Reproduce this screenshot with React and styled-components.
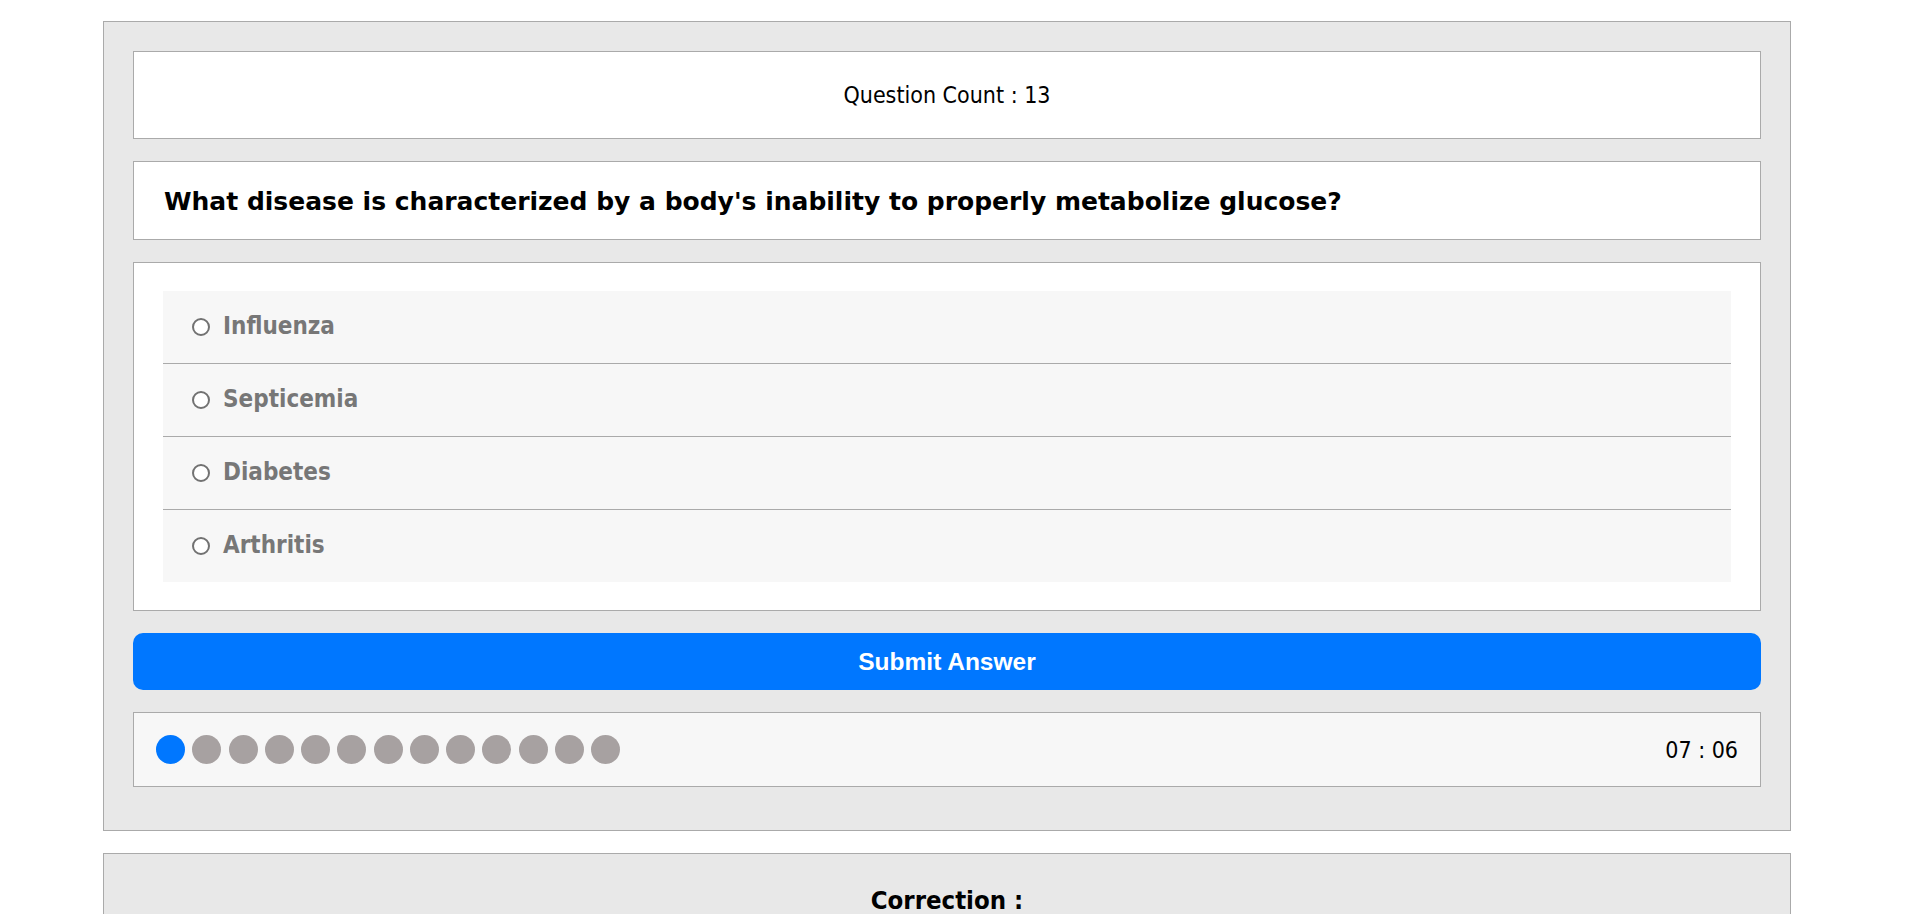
import React, { useState } from "react";
import styled, { createGlobalStyle } from "styled-components";

const Global = createGlobalStyle`
  html, body { margin: 0; padding: 0; background: #ffffff; }
  body { font-family: Tahoma, "DejaVu Sans Condensed", "DejaVu Sans", Verdana, sans-serif; color: #000; }
  * { box-sizing: border-box; }
`;

const Page = styled.div`
  padding: 21px 0 19px 103px;
  display: flex;
  flex-direction: column;
  gap: 22px;
`;

const Quiz = styled.section`
  width: 1688px;
  background: #e8e8e8;
  border: 1px solid #aaaaaa;
  padding: 29px 29px 43px;
  display: flex;
  flex-direction: column;
  gap: 22px;
`;

const Card = styled.div`
  background: ${(p) => p.$bg || "#ffffff"};
  border: 1px solid #aaaaaa;
`;

const CountCard = styled(Card)`
  height: 88px;
  display: flex;
  align-items: center;
  justify-content: center;
  font-size: 23px;
`;

const QuestionCard = styled(Card)`
  height: 79px;
  display: flex;
  align-items: center;
  padding: 2px 30px 0;
`;

const QuestionText = styled.h2`
  margin: 0;
  font-family: "DejaVu Sans", Verdana, sans-serif;
  font-size: 25px;
  font-weight: bold;
`;

const OptionsCard = styled(Card)`
  padding: 28px 29px;
`;

const OptionList = styled.ul`
  list-style: none;
  margin: 0;
  padding: 0;
  background: #f7f7f7;
`;

const OptionRow = styled.li`
  box-sizing: content-box;
  height: 72px;
  display: flex;
  align-items: center;
  padding-left: 29px;
  gap: 13px;
  & + & { border-top: 1px solid #aaaaaa; }
`;

const Radio = styled.input.attrs({ type: "radio" })`
  appearance: none;
  margin: 0;
  width: 18px;
  height: 18px;
  border-radius: 50%;
  border: 2px solid #727272;
  background: #ffffff;
  flex: none;
  &:checked { border: 5px solid #0077ff; }
`;

const OptionLabel = styled.label`
  font-size: 24px;
  font-weight: bold;
  color: #777777;
  margin-top: -3px;
`;

const SubmitButton = styled.button`
  height: 57px;
  width: 100%;
  border: none;
  border-radius: 10px;
  background: #0077ff;
  color: #ffffff;
  font-family: "Liberation Sans", Arial, sans-serif;
  font-weight: bold;
  font-size: 24.5px;
  cursor: pointer;
`;

const ProgressBar = styled(Card)`
  height: 75px;
  display: flex;
  align-items: center;
  justify-content: space-between;
  padding: 0 22px 0 22px;
`;

const Dots = styled.div`
  display: flex;
  gap: 7.25px;
`;

const Dot = styled.span`
  width: 29px;
  height: 29px;
  border-radius: 50%;
  background: ${(p) => (p.$active ? "#0077ff" : "#a7a1a1")};
`;

const Timer = styled.span`
  font-size: 23px;
`;

const Correction = styled.section`
  width: 1688px;
  min-height: 140px;
  background: #e8e8e8;
  border: 1px solid #aaaaaa;
  padding: 31px 30px 30px;
`;

const CorrectionTitle = styled.h3`
  margin: 0;
  text-align: center;
  font-size: 25.5px;
  font-weight: bold;
  line-height: 1.2;
`;

const options = ["Influenza", "Septicemia", "Diabetes", "Arthritis"];

export default function App() {
  const [choice, setChoice] = useState(null);
  return (
    <>
      <Global />
      <Page>
        <Quiz>
          <CountCard>Question Count : 13</CountCard>
          <QuestionCard>
            <QuestionText>
              What disease is characterized by a body's inability to properly metabolize glucose?
            </QuestionText>
          </QuestionCard>
          <OptionsCard>
            <OptionList>
              {options.map((o, i) => (
                <OptionRow key={o}>
                  <Radio
                    id={`opt-${i}`}
                    name="answer"
                    checked={choice === i}
                    onChange={() => setChoice(i)}
                  />
                  <OptionLabel htmlFor={`opt-${i}`}>{o}</OptionLabel>
                </OptionRow>
              ))}
            </OptionList>
          </OptionsCard>
          <SubmitButton>Submit Answer</SubmitButton>
          <ProgressBar $bg="#f7f7f7">
            <Dots>
              {Array.from({ length: 13 }).map((_, i) => (
                <Dot key={i} $active={i === 0} />
              ))}
            </Dots>
            <Timer>07 : 06</Timer>
          </ProgressBar>
        </Quiz>
        <Correction>
          <CorrectionTitle>Correction :</CorrectionTitle>
        </Correction>
      </Page>
    </>
  );
}
